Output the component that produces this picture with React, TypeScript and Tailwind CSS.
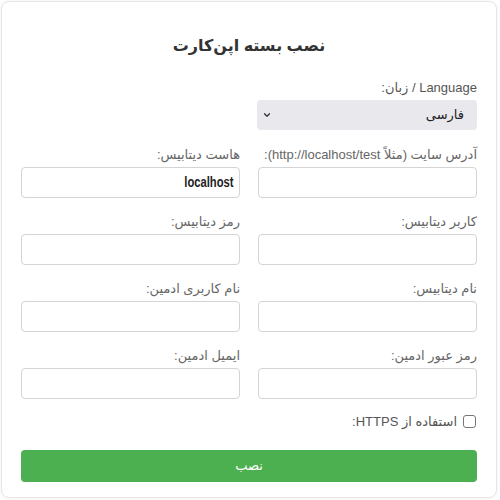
import { ChevronDown } from 'lucide-react';

const fields = [
  { label: 'آدرس سایت (مثلاً http://localhost/test):', value: '' },
  { label: 'هاست دیتابیس:', value: 'localhost' },
  { label: 'کاربر دیتابیس:', value: '' },
  { label: 'رمز دیتابیس:', value: '' },
  { label: 'نام دیتابیس:', value: '' },
  { label: 'نام کاربری ادمین:', value: '' },
  { label: 'رمز عبور ادمین:', value: '' },
  { label: 'ایمیل ادمین:', value: '' },
];

export default function App() {
  return (
    <div className="h-[500px] w-[500px] overflow-hidden bg-white p-[1px] font-['Liberation_Sans','DejaVu_Sans',sans-serif]">
      <div dir="rtl" className="h-[497px] w-[496px] rounded-lg border border-[#e6e6e6] bg-white px-[19px] pt-[32px] shadow-[0_0_4px_rgba(0,0,0,0.06)]">
        <h1 className="text-center text-[16px] font-bold leading-6 text-[#333]">نصب بسته اپن‌کارت</h1>

        <div className="mt-[22px] w-[220px]">
          <label className="block text-[13px] leading-4 text-[#555]">Language / زبان:</label>
          <div className="mt-[4px] flex h-[30px] items-center justify-between rounded-[4px] bg-[#e9e9ed] pl-[5px] pr-[13px]">
            <span className="text-[13px] text-[#222]">فارسی</span>
            <ChevronDown size={10} strokeWidth={3} className="text-[#333]" />
          </div>
        </div>

        <div className="mt-[17px] grid grid-cols-2 gap-x-[18px] gap-y-[16px]">
          {fields.map((f) => (
            <div key={f.label}>
              <label className="block text-[13px] leading-4 text-[#666]">{f.label}</label>
              <div className="mt-[4px] flex h-[31px] items-center rounded-[4px] border border-[#d4d4d4] bg-white px-[6px]">
                {f.value && (
                  <span className="inline-block origin-right scale-x-[0.8] text-[14px] font-bold text-[#222]">
                    {f.value}
                  </span>
                )}
              </div>
            </div>
          ))}
        </div>

        <div className="mt-[13px] flex items-center gap-[6px] pr-[1px]">
          <span className="h-[13px] w-[13px] rounded-[3px] border border-[#767676] bg-white" />
          <span className="text-[13px] text-[#555]">استفاده از HTTPS:</span>
        </div>

        <button className="mt-[18px] flex h-[32px] w-full items-center justify-center rounded-[4px] bg-[#4caf50] text-[13px] text-white">
          نصب
        </button>
      </div>
    </div>
  );
}
